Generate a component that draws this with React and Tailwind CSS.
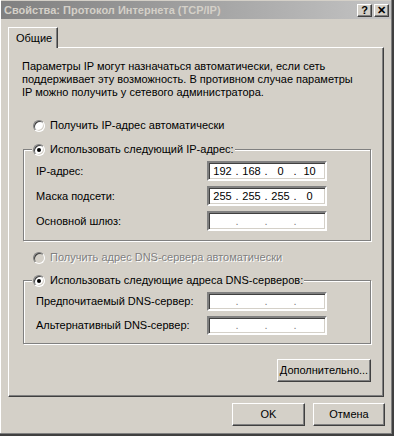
import React from "react";

const F = { fontFamily: '"Liberation Sans", Arial, sans-serif' };

function Radio({ checked, disabled }) {
  return (
    <span
      className={
        "relative inline-flex items-center justify-center w-[12px] h-[12px] rounded-full border border-t-[#808080] border-l-[#808080] border-b-[#ffffff] border-r-[#ffffff] shadow-[inset_1px_1px_0_#404040,inset_-1px_-1px_0_#d4d0c8] " +
        (disabled ? "bg-[#d4d0c8]" : "bg-white")
      }
    >
      {checked && <span className="w-[4px] h-[4px] rounded-full bg-black" />}
    </span>
  );
}

function IpBox({ values, h }) {
  const v = values || ["", "", "", ""];
  return (
    <div
      className={
        "w-[120px] flex items-center bg-white border-2 border-t-[#808080] border-l-[#808080] border-b-[#ffffff] border-r-[#ffffff] shadow-[inset_1px_1px_0_#404040,inset_-1px_-1px_0_#d4d0c8] pl-[1px] " +
        h
      }
    >
      {v.map((x, i) => (
        <React.Fragment key={i}>
          <span className="w-[25px] text-center">{x}</span>
          {i < 3 && (
            <span className={"w-[4px] text-center " + (values ? "" : "text-[#808080]")}>.</span>
          )}
        </React.Fragment>
      ))}
    </div>
  );
}

function Btn({ children, w }) {
  return (
    <div
      className={
        "h-[23px] flex items-center justify-center border border-t-[#ffffff] border-l-[#ffffff] border-r-[#404040] border-b-[#404040] shadow-[inset_-1px_-1px_0_#808080] bg-[#d4d0c8] " +
        w
      }
    >
      {children}
    </div>
  );
}

function TitleBtn({ children }) {
  return (
    <div className="w-[15px] h-[13px] flex items-center justify-center border border-t-[#ffffff] border-l-[#ffffff] border-r-[#404040] border-b-[#404040] shadow-[inset_-1px_-1px_0_#808080] bg-[#d4d0c8] text-black text-[11px] font-bold leading-none">
      {children}
    </div>
  );
}

export default function App() {
  return (
    <div
      style={F}
      className="w-[394px] h-[436px] bg-[#d4d0c8] text-[11px] leading-[13px] text-black flex flex-col border-r-[2px] border-b-[2px] border-r-[#404040] border-b-[#404040] shadow-[inset_-1px_-1px_0_#808080,inset_1px_0_0_#ffffff] overflow-hidden"
    >
      {/* title bar */}
      <div className="mt-[1px] ml-[1px] mr-[1px] h-[18px] flex items-center bg-linear-to-r from-[#808080] to-[#c4c4c4]">
        <span className="pl-[3px] font-bold text-[#d4d0c8] text-[11px]">
          Свойства: Протокол Интернета (TCP/IP)
        </span>
        <div className="ml-auto mr-[2px] flex gap-[2px]">
          <TitleBtn>?</TitleBtn>
          <TitleBtn>✕</TitleBtn>
        </div>
      </div>

      {/* tab */}
      <div className="mt-[8px] pl-[8px] flex">
        <div className="h-[21px] w-[50px] border-t border-l border-r border-t-[#ffffff] border-l-[#ffffff] border-r-[#404040] flex items-center pl-[7px] relative z-10 bg-[#d4d0c8] -mb-[1px] shadow-[inset_-1px_0_0_#808080]">
          Общие
        </div>
      </div>

      {/* panel */}
      <div className="ml-[8px] w-[376px] h-[350px] border border-t-[#ffffff] border-l-[#ffffff] border-r-[#404040] border-b-[#404040] shadow-[inset_-1px_-1px_0_#808080] flex flex-col">
        <p className="pl-[13px] pt-[12px]">
          Параметры IP могут назначаться автоматически, если сеть
          <br />
          поддерживает эту возможность. В противном случае параметры
          <br />
          IP можно получить у сетевого администратора.
        </p>

        <div className="mt-[20px] pl-[24px] flex items-center gap-[5px] h-[13px]">
          <Radio />
          <span>Получить IP-адрес автоматически</span>
        </div>

        <fieldset className="mt-[11px] ml-[14px] w-[348px] border border-[#808080] shadow-[inset_1px_1px_0_#ffffff,1px_1px_0_#ffffff] pt-[5px] pb-[9px] px-0 flex flex-col gap-[5px]">
          <legend className="ml-[8px] px-[1px] bg-[#d4d0c8] flex items-center gap-[5px] h-[13px]">
            <Radio checked />
            <span>Использовать следующий IP-адрес:</span>
          </legend>
          <div className="flex items-center pl-[12px]">
            <span className="w-[171px]">IP-адрес:</span>
            <IpBox values={["192", "168", "0", "10"]} h="h-[20px]" />
          </div>
          <div className="flex items-center pl-[12px]">
            <span className="w-[171px]">Маска подсети:</span>
            <IpBox values={["255", "255", "255", "0"]} h="h-[20px]" />
          </div>
          <div className="flex items-center pl-[12px]">
            <span className="w-[171px]">Основной шлюз:</span>
            <IpBox h="h-[20px]" />
          </div>
        </fieldset>

        <div className="mt-[10px] pl-[24px] flex items-center gap-[5px] h-[13px] text-[#808080] [text-shadow:1px_1px_0_#ffffff]">
          <Radio disabled />
          <span>Получить адрес DNS-сервера автоматически</span>
        </div>

        <fieldset className="mt-[10px] ml-[14px] w-[348px] border border-[#808080] shadow-[inset_1px_1px_0_#ffffff,1px_1px_0_#ffffff] pt-[5px] pb-[8px] px-0 flex flex-col gap-[5px]">
          <legend className="ml-[8px] px-[1px] bg-[#d4d0c8] flex items-center gap-[5px] h-[13px]">
            <Radio checked />
            <span>Использовать следующие адреса DNS-серверов:</span>
          </legend>
          <div className="flex items-center pl-[12px]">
            <span className="w-[171px]">Предпочитаемый DNS-сервер:</span>
            <IpBox h="h-[19px]" />
          </div>
          <div className="flex items-center pl-[12px]">
            <span className="w-[171px]">Альтернативный DNS-сервер:</span>
            <IpBox h="h-[19px]" />
          </div>
        </fieldset>

        <div className="mt-[15px] flex justify-end pr-[12px]">
          <Btn w="w-[94px]">Дополнительно...</Btn>
        </div>
      </div>

      {/* bottom buttons */}
      <div className="mt-[6px] flex justify-end gap-[8px] pr-[7px]">
        <Btn w="w-[73px]">OK</Btn>
        <Btn w="w-[72px]">Отмена</Btn>
      </div>
    </div>
  );
}
